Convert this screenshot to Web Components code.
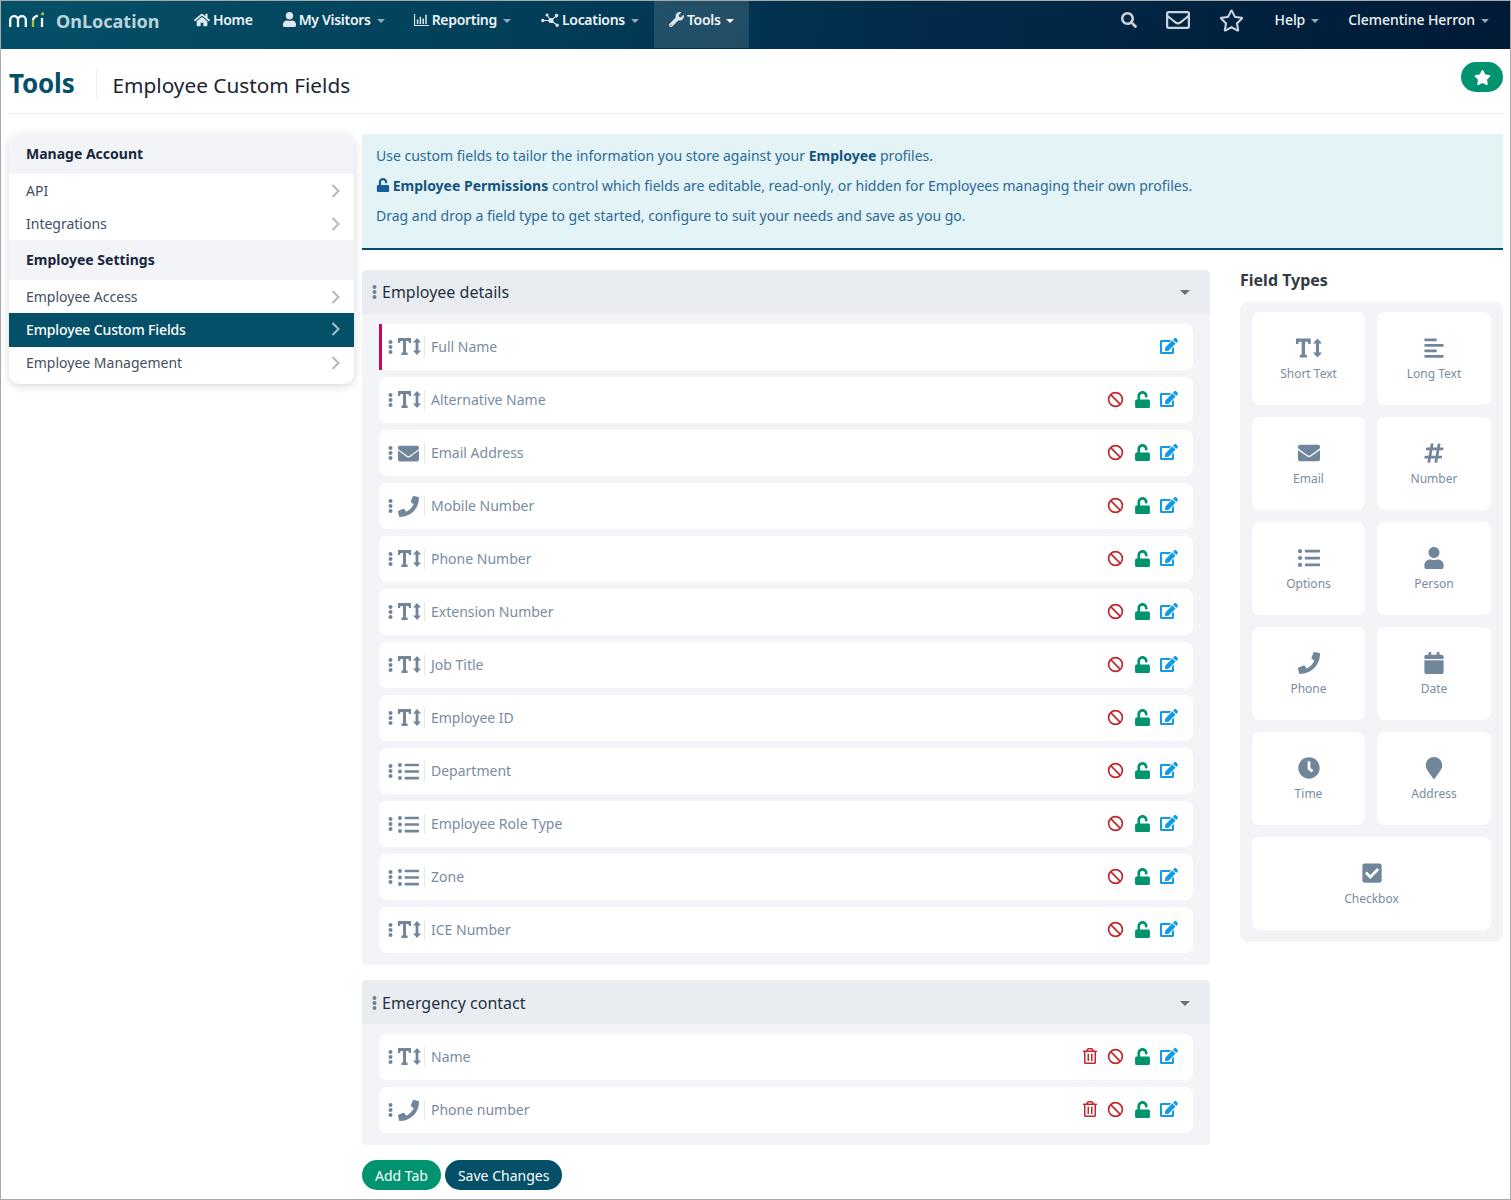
<!DOCTYPE html>
<html>
<head>
<meta charset="utf-8">
<title>Employee Custom Fields</title>
<style>
  html, body { margin: 0; padding: 0; background: #fff; }
  body { font-family: "Noto Sans", "Open Sans", sans-serif; font-size: 14px; }
</style>
</head>
<body>
<app-shell>
  <top-nav slot="nav"></top-nav>
  <page-title slot="title" section="Tools" name="Employee Custom Fields"></page-title>

  <side-menu slot="side">
    <menu-head>Manage Account</menu-head>
    <menu-item>API</menu-item>
    <menu-item>Integrations</menu-item>
    <menu-head>Employee Settings</menu-head>
    <menu-item>Employee Access</menu-item>
    <menu-item active>Employee Custom Fields</menu-item>
    <menu-item class="last">Employee Management</menu-item>
  </side-menu>

  <info-banner slot="banner"></info-banner>

  <div slot="tabs">
    <field-tab label="Employee details">
      <field-row icon="text" label="Full Name" locked></field-row>
      <field-row icon="text" label="Alternative Name"></field-row>
      <field-row icon="envelope" label="Email Address"></field-row>
      <field-row icon="phone" label="Mobile Number"></field-row>
      <field-row icon="text" label="Phone Number"></field-row>
      <field-row icon="text" label="Extension Number"></field-row>
      <field-row icon="text" label="Job Title"></field-row>
      <field-row icon="text" label="Employee ID"></field-row>
      <field-row icon="list" label="Department"></field-row>
      <field-row icon="list" label="Employee Role Type"></field-row>
      <field-row icon="list" label="Zone"></field-row>
      <field-row icon="text" label="ICE Number"></field-row>
    </field-tab>
    <field-tab label="Emergency contact" style="--head-pad: 2px">
      <field-row icon="text" label="Name" removable></field-row>
      <field-row icon="phone" label="Phone number" removable></field-row>
    </field-tab>
    <action-bar></action-bar>
  </div>

  <field-types slot="types">
    <type-card icon="text" label="Short Text"></type-card>
    <type-card icon="align" label="Long Text"></type-card>
    <type-card icon="envelope" label="Email"></type-card>
    <type-card icon="hash" label="Number"></type-card>
    <type-card icon="list" label="Options"></type-card>
    <type-card icon="user" label="Person"></type-card>
    <type-card icon="phone" label="Phone"></type-card>
    <type-card icon="calendar" label="Date"></type-card>
    <type-card icon="clock" label="Time"></type-card>
    <type-card icon="marker" label="Address"></type-card>
    <type-card icon="check" label="Checkbox" wide></type-card>
  </field-types>
</app-shell>

<script>
const dot = (x, y, r) => `M${x - r} ${y}a${r} ${r} 0 1 0 ${2 * r} 0a${r} ${r} 0 1 0 ${-2 * r} 0z`;
const bar = (x1, y1, x2, y2, w) => {
  const len = Math.hypot(x2 - x1, y2 - y1);
  const nx = (y1 - y2) / len * w / 2, ny = (x2 - x1) / len * w / 2;
  return `M${x1 + nx} ${y1 + ny}L${x2 + nx} ${y2 + ny}L${x2 - nx} ${y2 - ny}L${x1 - nx} ${y1 - ny}z`;
};

const ICONS = {
  star: ['0 0 576 512', 'M259.3 17.8L194 150.2 47.9 171.5c-26.2 3.8-36.7 36.1-17.7 54.6l105.7 103-25 145.5c-4.5 26.3 23.2 46 46.4 33.7L288 439.6l130.7 68.7c23.2 12.2 50.9-7.4 46.4-33.7l-25-145.5 105.7-103c19-18.5 8.5-50.8-17.7-54.6L382 150.2 316.7 17.8c-11.7-23.6-45.6-23.9-57.4 0z'],
  starline: ['0 0 576 512', 'M528.1 171.5L382 150.2 316.7 17.8c-11.7-23.6-45.6-23.9-57.4 0L194 150.2 47.9 171.5c-26.2 3.8-36.7 36.1-17.7 54.6l105.7 103-25 145.5c-4.5 26.3 23.2 46 46.4 33.7L288 439.6l130.7 68.7c23.2 12.2 50.9-7.4 46.4-33.7l-25-145.5 105.7-103c19-18.5 8.5-50.8-17.7-54.6zM388.6 312.3l23.7 138.4L288 385.4l-124.3 65.3 23.7-138.4-100.6-98 139-20.2 62.2-126 62.2 126 139 20.2-100.6 98z'],
  phone: ['0 0 512 512', 'M493.4 24.6l-104-24c-11.3-2.6-22.9 3.3-27.5 13.9l-48 112c-4.2 9.8-1.4 21.3 6.9 28l60.6 49.6c-36 76.7-98.9 140.5-177.2 177.2l-49.6-60.6c-6.8-8.3-18.2-11.1-28-6.9l-112 48C3.9 366.5-2 378.1.6 389.4l24 104C27.1 504.2 36.7 512 48 512c256.1 0 464-207.5 464-464 0-11.2-7.7-20.9-18.6-23.4z'],
  envelope: ['0 0 512 512', 'M502.3 190.8c3.9-3.1 9.7-.2 9.7 4.7V400c0 26.5-21.5 48-48 48H48c-26.5 0-48-21.5-48-48V195.6c0-5 5.7-7.8 9.7-4.7 22.4 17.4 52.1 39.5 154.1 113.6 21.1 15.4 56.7 47.8 92.2 47.6 35.7.3 72-32.8 92.3-47.6 102-74.1 131.6-96.3 154-113.7zM256 320c23.2.4 56.6-29.2 73.4-41.4 132.7-96.3 142.8-104.7 173.4-128.7 5.8-4.5 9.2-11.5 9.2-18.9v-19c0-26.5-21.5-48-48-48H48C21.5 64 0 85.5 0 112v19c0 7.4 3.4 14.3 9.2 18.9 30.6 23.9 40.7 32.4 173.4 128.7 16.8 12.2 50.2 41.8 73.4 41.4z'],
  envelopeline: ['0 0 512 512', 'M464 64H48C21.49 64 0 85.49 0 112v288c0 26.51 21.49 48 48 48h416c26.51 0 48-21.49 48-48V112c0-26.51-21.49-48-48-48zm0 48v40.805c-22.422 18.259-58.168 46.651-134.587 106.49-16.841 13.247-50.201 45.072-73.413 44.701-23.208.375-56.579-31.459-73.413-44.701C106.18 199.465 70.425 171.067 48 152.805V112h416zM48 400V214.398c22.914 18.251 55.409 43.862 104.938 82.646 21.857 17.205 60.134 55.186 103.062 54.955 42.717.231 80.509-37.199 103.053-54.947 49.528-38.783 82.032-64.401 104.947-82.653V400H48z'],
  user: ['0 0 448 512', 'M224 256c70.7 0 128-57.3 128-128S294.7 0 224 0 96 57.3 96 128s57.3 128 128 128zm89.6 32h-16.7c-22.2 10.2-46.9 16-72.9 16s-50.6-5.8-72.9-16h-16.7C60.2 288 0 348.2 0 422.4V464c0 26.5 21.5 48 48 48h352c26.5 0 48-21.5 48-48v-41.6c0-74.2-60.2-134.4-134.4-134.4z'],
  home: ['0 0 576 512', 'M280.37 148.26L96 300.11V464a16 16 0 0 0 16 16l112.06-.29a16 16 0 0 0 15.92-16V368a16 16 0 0 1 16-16h64a16 16 0 0 1 16 16v95.64a16 16 0 0 0 16 16.05L464 480a16 16 0 0 0 16-16V300L295.67 148.26a12.19 12.19 0 0 0-15.3 0zM571.6 251.47L488 182.56V44.05a12 12 0 0 0-12-12h-56a12 12 0 0 0-12 12v72.61L318.47 43a48 48 0 0 0-61 0L4.34 251.47a12 12 0 0 0-1.6 16.9l25.5 31A12 12 0 0 0 45.15 301l235.22-193.74a12.19 12.19 0 0 1 15.3 0L530.9 301a12 12 0 0 0 16.9-1.6l25.5-31a12 12 0 0 0-1.7-16.93z'],
  wrench: ['0 0 512 512', 'M507.73 109.1c-2.24-9.03-13.54-12.09-20.12-5.51l-74.36 74.36-67.88-11.31-11.31-67.88 74.36-74.36c6.62-6.62 3.43-17.9-5.66-20.16-47.38-11.74-99.55.91-136.58 37.93-39.64 39.64-50.55 97.1-34.05 147.2L18.74 402.76c-24.99 24.99-24.99 65.51 0 90.5 24.99 24.99 65.51 24.99 90.5 0l213.21-213.21c50.12 16.71 107.47 5.68 147.37-34.22 37.07-37.07 49.7-89.32 37.91-136.73zM64 472c-13.25 0-24-10.75-24-24 0-13.26 10.75-24 24-24s24 10.74 24 24c0 13.25-10.75 24-24 24z'],
  search: ['0 0 512 512', 'M505 442.7L405.3 343c-4.5-4.5-10.6-7-17-7H372c27.6-35.3 44-79.7 44-128C416 93.1 322.9 0 208 0S0 93.1 0 208s93.1 208 208 208c48.3 0 92.7-16.4 128-44v16.3c0 6.4 2.5 12.5 7 17l99.7 99.7c9.4 9.4 24.6 9.4 33.9 0l28.3-28.3c9.4-9.4 9.4-24.6.1-34zM208 336c-70.7 0-128-57.2-128-128 0-70.7 57.2-128 128-128 70.7 0 128 57.2 128 128 0 70.7-57.2 128-128 128z'],
  unlock: ['0 0 448 512', 'M400 256H152V152.9c0-39.6 31.7-72.5 71.3-72.9 40-.4 72.7 32.1 72.7 72v16c0 13.3 10.7 24 24 24h32c13.3 0 24-10.7 24-24v-16C376 68 307.5-.3 223.5 0 139.5.3 72 69.5 72 153.5V256H48c-26.5 0-48 21.5-48 48v160c0 26.5 21.5 48 48 48h352c26.5 0 48-21.5 48-48V304c0-26.5-21.5-48-48-48z'],
  edit: ['0 0 576 512', 'M402.6 83.2l90.2 90.2c3.8 3.8 3.8 10 0 13.8L274.4 405.6l-92.8 10.3c-12.4 1.4-22.9-9.1-21.5-21.5l10.3-92.8L388.8 83.2c3.8-3.8 10-3.8 13.8 0zm162-22.9l-48.8-48.8c-15.2-15.2-39.9-15.2-55.2 0l-35.4 35.4c-3.8 3.8-3.8 10 0 13.8l90.2 90.2c3.8 3.8 10 3.8 13.8 0l35.4-35.4c15.2-15.3 15.2-40 0-55.2zM384 346.2V448H64V128h229.8c3.2 0 6.2-1.3 8.5-3.5l40-40c7.6-7.6 2.2-20.5-8.5-20.5H48C21.5 64 0 85.5 0 112v352c0 26.5 21.5 48 48 48h352c26.5 0 48-21.5 48-48V306.2c0-10.7-12.9-16-20.5-8.5l-40 40c-2.2 2.3-3.5 5.3-3.5 8.5z'],
  trash: ['0 0 448 512', 'M268 416h24a12 12 0 0 0 12-12V188a12 12 0 0 0-12-12h-24a12 12 0 0 0-12 12v216a12 12 0 0 0 12 12zM432 80h-82.41l-34-56.7A48 48 0 0 0 274.41 0H173.59a48 48 0 0 0-41.16 23.3L98.41 80H16A16 16 0 0 0 0 96v16a16 16 0 0 0 16 16h16v336a48 48 0 0 0 48 48h288a48 48 0 0 0 48-48V128h16a16 16 0 0 0 16-16V96a16 16 0 0 0-16-16zM171.84 50.91A6 6 0 0 1 177 48h94a6 6 0 0 1 5.15 2.91L293.61 80H154.39zM368 464H80V128h288zm-212-48h24a12 12 0 0 0 12-12V188a12 12 0 0 0-12-12h-24a12 12 0 0 0-12 12v216a12 12 0 0 0 12 12z'],
  list: ['0 0 512 512', 'M48 48a48 48 0 1 0 48 48 48 48 0 0 0-48-48zm0 160a48 48 0 1 0 48 48 48 48 0 0 0-48-48zm0 160a48 48 0 1 0 48 48 48 48 0 0 0-48-48zm448 16H176a16 16 0 0 0-16 16v32a16 16 0 0 0 16 16h320a16 16 0 0 0 16-16v-32a16 16 0 0 0-16-16zm0-320H176a16 16 0 0 0-16 16v32a16 16 0 0 0 16 16h320a16 16 0 0 0 16-16V80a16 16 0 0 0-16-16zm0 160H176a16 16 0 0 0-16 16v32a16 16 0 0 0 16 16h320a16 16 0 0 0 16-16v-32a16 16 0 0 0-16-16z'],
  align: ['0 0 448 512', 'M12.83 352h262.34A12.82 12.82 0 0 0 288 339.17v-38.34A12.82 12.82 0 0 0 275.17 288H12.83A12.82 12.82 0 0 0 0 300.83v38.34A12.82 12.82 0 0 0 12.83 352zm0-256h262.34A12.82 12.82 0 0 0 288 83.17V44.83A12.82 12.82 0 0 0 275.17 32H12.83A12.82 12.82 0 0 0 0 44.83v38.34A12.82 12.82 0 0 0 12.83 96zM432 160H16a16 16 0 0 0-16 16v32a16 16 0 0 0 16 16h416a16 16 0 0 0 16-16v-32a16 16 0 0 0-16-16zm0 256H16a16 16 0 0 0-16 16v32a16 16 0 0 0 16 16h416a16 16 0 0 0 16-16v-32a16 16 0 0 0-16-16z'],
  hash: ['0 0 448 512', 'M440.667 182.109l7.143-40c1.313-7.355-4.342-14.109-11.813-14.109h-74.81l14.623-81.891C377.123 38.754 371.468 32 363.997 32h-40.632a12 12 0 0 0-11.813 9.891L296.175 128H197.54l14.623-81.891C213.477 38.754 207.822 32 200.35 32h-40.632a12 12 0 0 0-11.813 9.891L132.528 128H53.432a12 12 0 0 0-11.813 9.891l-7.143 40C33.163 185.246 38.818 192 46.289 192h74.81L98.242 320H19.146a12 12 0 0 0-11.813 9.891l-7.143 40C-1.123 377.246 4.532 384 12.003 384h74.81L72.19 465.891C70.877 473.246 76.532 480 84.003 480h40.632a12 12 0 0 0 11.813-9.891L151.825 384h98.634l-14.623 81.891C234.523 473.246 240.178 480 247.65 480h40.632a12 12 0 0 0 11.813-9.891L315.472 384h79.096a12 12 0 0 0 11.813-9.891l7.143-40c1.313-7.355-4.342-14.109-11.813-14.109h-74.81l22.857-128h79.096a12 12 0 0 0 11.813-9.891zM261.889 320h-98.634l22.857-128h98.634l-22.857 128z'],
  calendar: ['0 0 448 512', 'M12 192h424c6.6 0 12 5.4 12 12v260c0 26.5-21.5 48-48 48H48c-26.5 0-48-21.5-48-48V204c0-6.6 5.4-12 12-12zm436-44v-36c0-26.5-21.5-48-48-48h-48V12c0-6.6-5.4-12-12-12h-40c-6.6 0-12 5.4-12 12v52H160V12c0-6.6-5.4-12-12-12h-40c-6.6 0-12 5.4-12 12v52H48C21.5 64 0 85.5 0 112v36c0 6.6 5.4 12 12 12h424c6.6 0 12-5.4 12-12z'],
  clock: ['0 0 512 512', 'M256,8C119,8,8,119,8,256S119,504,256,504,504,393,504,256,393,8,256,8Zm92.49,313h0l-20,25a16,16,0,0,1-22.49,2.5h0l-67-49.72a40,40,0,0,1-15-31.23V112a16,16,0,0,1,16-16h32a16,16,0,0,1,16,16V256l58,42.5A16,16,0,0,1,348.49,321Z'],
  marker: ['0 0 384 512', 'M172.268 501.67C26.97 291.031 0 269.413 0 192 0 85.961 85.961 0 192 0s192 85.961 192 192c0 77.413-26.97 99.031-172.268 309.67-9.535 13.774-29.93 13.773-39.464 0z'],
  check: ['0 0 448 512', 'M400 480H48c-26.51 0-48-21.49-48-48V80c0-26.51 21.49-48 48-48h352c26.51 0 48 21.49 48 48v352c0 26.51-21.49 48-48 48zm-204.686-98.059l184-184c6.248-6.248 6.248-16.379 0-22.627l-22.627-22.627c-6.248-6.248-16.379-6.249-22.628 0L184 302.745l-70.059-70.059c-6.248-6.248-16.379-6.248-22.628 0l-22.627 22.627c-6.248 6.248-6.248 16.379 0 22.627l104 104c6.249 6.25 16.379 6.25 22.628.001z'],
  text: ['0 0 23 17', 'M0 0h13v5h-2l-.6-2H8v11.5h1.6V17H3.4v-2.5H5V3H2.6L2 5H0zM19 0l4 4.5h-2.6v8H23L19 17l-4-4.5h2.6v-8H15z'],
  chart: ['0 0 16 14', 'M0 1h1.2v11.8H16V14H0zM3 7h1.6v4.8H3zM6 4h1.6v7.8H6zM9 6h1.6v5.8H9zM12 2h1.6v9.8H12z'],
  nodes: ['0 0 18 14', [
    dot(1.8, 7.5, 1.7), dot(6, 2, 1.5), dot(15.6, 2.6, 1.8), dot(16.2, 12.2, 1.7), dot(10, 7.5, 2.6),
    bar(1.8, 7.5, 10, 7.5, 1.1), bar(6, 2, 10, 7.5, 1.1), bar(15.6, 2.6, 10, 7.5, 1.1), bar(16.2, 12.2, 10, 7.5, 1.1)
  ].join('')]
};

function icon(name, size) {
  const [box, d] = ICONS[name];
  return `<svg width="${size}" height="${size}" viewBox="${box}" fill="currentColor" aria-hidden="true"><path d="${d}"/></svg>`;
}

const DOTS = `<svg width="5" height="14" viewBox="0 0 5 14" fill="currentColor" aria-hidden="true"><circle cx="2.5" cy="2" r="2"/><circle cx="2.5" cy="7" r="2"/><circle cx="2.5" cy="12" r="2"/></svg>`;
const BAN = `<svg width="17" height="17" viewBox="0 0 17 17" fill="none" stroke="currentColor" stroke-width="1.7" aria-hidden="true"><circle cx="8.5" cy="8.5" r="6.9"/><path d="M3.7 3.7l9.6 9.6"/></svg>`;

class Base extends HTMLElement {
  constructor() {
    super();
    this.attachShadow({ mode: 'open' });
  }
  connectedCallback() {
    this.shadowRoot.innerHTML = this.render();
  }
}

class AppShell extends Base {
  render() {
    return `
      <style>
        :host { display: block; width: 1509px; height: 1198px; border: 1px solid #a9a9a9; overflow: hidden; background: #fff; }
        .page { display: grid; grid-template-columns: 345px 1141px; column-gap: 8px; padding: 20px 7px 0 8px; }
        .work { display: flex; gap: 30px; margin-top: 20px; }
        .tabs { width: 848px; flex: none; }
        .types { width: 263px; flex: none; }
      </style>
      <slot name="nav"></slot>
      <slot name="title"></slot>
      <div class="page">
        <div><slot name="side"></slot></div>
        <div>
          <slot name="banner"></slot>
          <div class="work">
            <div class="tabs"><slot name="tabs"></slot></div>
            <div class="types"><slot name="types"></slot></div>
          </div>
        </div>
      </div>`;
  }
}

class TopNav extends Base {
  render() {
    const link = (ic, w, text, caret, extra = '', style = '') => `
      <a class="link ${extra}" style="${style}">${ic ? `<span class="ic">${icon(ic, w)}</span>` : ''}${text}${caret ? '<i class="caret"></i>' : ''}</a>`;
    return `
      <style>
        :host { display: flex; align-items: stretch; height: 48px; color: #fff;
          background: linear-gradient(100deg, #045068 0%, #03405a 32%, #012a48 62%, #001a36 100%);
          font: 600 14px "Noto Sans", sans-serif; letter-spacing: -.3px; }
        .brand { display: flex; align-items: center; width: 178px; padding: 0 0 8px 8px; box-sizing: border-box; gap: 9px; }
        .brand svg { overflow: visible; }
        .brand b { color: #b9d3da; font-size: 18px; font-weight: 700; letter-spacing: 0; }
        .link { display: flex; align-items: center; height: 47px; box-sizing: border-box; padding: 0 15px 10px; white-space: nowrap; color: #eef3f6; }
        .link.on { background: rgba(255,255,255,.13); }
        .ic { display: inline-flex; margin-right: 3px; color: #dfe8ec; }
        .person .ic { margin: 0 2px 0 -1px; }
        .caret { width: 0; height: 0; margin-left: 6px; margin-top: 2px; border: 4px solid transparent; border-top-color: #98a9b4; border-bottom: 0; }
        .on .caret { border-top-color: #fff; margin-left: 5px; }
        .gap { flex: 1; }
        .tool { display: flex; align-items: center; padding-bottom: 10px; color: #c9d2d9; }
        .help { font-weight: 500; letter-spacing: -.06px; }
      </style>
      <div class="brand">
        <svg width="38" height="18" viewBox="0 0 38 18" fill="none" stroke="#fff" stroke-width="2.3" aria-hidden="true">
          <path d="M1.2 15V8a3.9 3.9 0 0 1 7.8 0v7M9 8a3.9 3.9 0 0 1 7.8 0v7"/>
          <path d="M24 8.5a4.8 4.8 0 0 1 5-4.6"/>
          <path d="M24 15V8.5" stroke="#a8c83a"/>
          <path d="M33 15V6"/>
          <circle cx="33.6" cy="1.8" r="1.6" fill="#a8c83a" stroke="none"/>
        </svg>
        <b>OnLocation</b>
      </div>
      ${link('home', 16, 'Home', false)}
      ${link('user', 15, 'My Visitors', true, 'person', 'margin-right:-1px')}
      ${link('chart', 15, 'Reporting', true)}
      ${link('nodes', 18, 'Locations', true)}
      ${link('wrench', 15, 'Tools', true, 'on')}
      <span class="gap"></span>
      <span class="tool" style="margin-right:29px">${icon('search', 16)}</span>
      <span class="tool" style="margin-right:29px">${icon('envelopeline', 24)}</span>
      <span class="tool" style="margin-right:16px">${icon('starline', 25)}</span>
      ${link('', 0, 'Help', true, 'help')}
      <a class="link help" style="padding-left:14px;padding-right:21px">Clementine Herron<i class="caret"></i></a>`;
  }
}

class PageTitle extends Base {
  render() {
    return `
      <style>
        :host { display: flex; align-items: center; height: 60px; padding-top: 4px; margin: 0 7px 0 8px; border-bottom: 1px solid #ececf0; position: relative; }
        h1 { margin: 0; font: 700 26px "Noto Sans", sans-serif; color: #045068; padding-right: 22px; letter-spacing: -.2px; line-height: 36px; }
        h2 { margin: 2px 0 0; height: 28px; box-sizing: border-box; padding: 2px 0 0 15px; font: 400 20.8px/26px "Noto Sans", sans-serif; color: #1c2530; border-left: 1px solid #ececf0; }
        .fav { position: absolute; right: 0; top: 13px; width: 42px; height: 30px; border-radius: 15px; background: #00936f; color: #fff; display: flex; align-items: center; justify-content: center; }
      </style>
      <h1>${this.getAttribute('section')}</h1>
      <h2>${this.getAttribute('name')}</h2>
      <span class="fav">${icon('star', 17)}</span>`;
  }
}

class SideMenu extends Base {
  render() {
    return `
      <style>
        :host { display: block; background: #fff; border-radius: 10px; overflow: hidden; padding-bottom: 4px; box-shadow: 0 2px 9px rgba(0,0,0,.16); }
      </style>
      <slot></slot>`;
  }
}

class MenuHead extends Base {
  render() {
    return `
      <style>
        :host { display: flex; align-items: center; height: 40px; box-sizing: border-box; padding: 0 0 2px 17px; background: #f3f4f8; color: #16263b; font: 700 14px "Noto Sans", sans-serif; }
      </style>
      <slot></slot>`;
  }
}

class MenuItem extends Base {
  render() {
    return `
      <style>
        :host { display: flex; align-items: center; justify-content: space-between; height: 33px; box-sizing: border-box; padding: 0 14px 0 17px; color: #42505f; font: 400 14px "Noto Sans", sans-serif; }
        :host(.last) { padding-bottom: 2px; }
        :host([active]) { height: 34px; padding-bottom: 2px; background: #045068; color: #fff; font-weight: 500; letter-spacing: -.13px; }
        svg { color: #b4b6b8; }
        :host([active]) svg { color: #a9c2cc; }
      </style>
      <slot></slot>
      <svg width="9" height="14" viewBox="0 0 9 14" fill="none" stroke="currentColor" stroke-width="2" aria-hidden="true"><path d="M1.5 1l6 6-6 6"/></svg>`;
  }
}

class InfoBanner extends Base {
  render() {
    return `
      <style>
        :host { display: block; height: 107px; padding: 7px 14px 0; background: #e4f3f5; border-bottom: 2px solid #045068; color: #2a6a97; font: 400 14px/30px "Noto Sans", sans-serif; }
        b { font-weight: 700; color: #15547f; }
        svg { vertical-align: -1px; margin-right: -1px; }
      </style>
      <div>Use custom fields to tailor the information you store against your <b>Employee</b> profiles.</div>
      <div><span style="color:#15609a">${icon('unlock', 14)}</span> <b>Employee Permissions</b> control which fields are editable, read-only, or hidden for Employees managing their own profiles.</div>
      <div>Drag and drop a field type to get started, configure to suit your needs and save as you go.</div>`;
  }
}

class FieldTab extends Base {
  render() {
    return `
      <style>
        :host { display: block; margin-bottom: 15px; background: #f3f4f8; border-radius: 5px 5px 3px 3px; overflow: hidden; }
        header { display: flex; align-items: center; height: 44px; box-sizing: border-box; padding: var(--head-pad, 0) 20px 0 10px; background: #e9edf1; color: #243244; font: 400 16px "Noto Sans", sans-serif; }
        header svg { color: #6f8092; margin-right: 5px; }
        .name { flex: 1; }
        .caret { border: 5px solid transparent; border-top-color: #6f6f6f; border-bottom: 0; }
        .body { display: flex; flex-direction: column; gap: 7px; padding: 10px 17px 12px; }
      </style>
      <header>${DOTS}<span class="name">${this.getAttribute('label')}</span><i class="caret"></i></header>
      <div class="body"><slot></slot></div>`;
  }
}

class FieldRow extends Base {
  render() {
    const kind = this.getAttribute('icon');
    const locked = this.hasAttribute('locked');
    const removable = this.hasAttribute('removable');
    return `
      <style>
        :host { display: flex; align-items: center; height: 46px; padding: 0 15px 0 9px; background: #fff; border-radius: 8px; color: #71869b; box-sizing: border-box; }
        :host([locked]) { border-left: 3px solid #c8075b; padding-left: 6px; border-radius: 0 8px 8px 0; }
        .dots { display: flex; width: 10px; margin-top: -1px; }
        .kind { display: flex; align-items: center; width: 27px; height: 20px; border-right: 1px solid #e6e8ec; box-sizing: border-box; }
        .kind.text svg { margin-top: -2px; }
        .label { flex: 1; padding: 0 0 2px 6px; color: #7a8ca1; font: 400 14px "Noto Sans", sans-serif; }
        .acts { display: flex; align-items: center; padding-bottom: 2px; }
        .act { display: flex; }
        .trash { color: #c0282d; margin-right: 9px; }
        .ban { color: #c0282d; margin-right: 10px; }
        .lock { color: #00936f; margin-right: 9px; }
        .edit { color: #0f9be8; }
      </style>
      <span class="dots">${DOTS}</span>
      <span class="kind ${kind}">${kind === 'text' ? icon(kind, 23) : icon(kind, 21)}</span>
      <span class="label">${this.getAttribute('label')}</span>
      <span class="acts">
        ${removable ? `<span class="act trash">${icon('trash', 16)}</span>` : ''}
        ${locked ? '' : `<span class="act ban">${BAN}</span><span class="act lock">${icon('unlock', 17)}</span>`}
        <span class="act edit">${icon('edit', 18)}</span>
      </span>`;
  }
}

class ActionBar extends Base {
  render() {
    return `
      <style>
        :host { display: flex; gap: 4px; }
        span { display: flex; align-items: center; height: 30px; padding: 0 13px; border-radius: 15px; color: #fff; font: 400 14px "Noto Sans", sans-serif; }
        .add { background: #00936f; }
        .save { background: #045068; }
      </style>
      <span class="add">Add Tab</span>
      <span class="save">Save Changes</span>`;
  }
}

class FieldTypes extends Base {
  render() {
    return `
      <style>
        :host { display: block; }
        h3 { margin: 0; height: 32px; font: 700 16px/20px "Noto Sans", sans-serif; color: #333a42; }
        .panel { display: grid; grid-template-columns: 113px 114px; gap: 12px; padding: 10px 12px 12px; background: #f3f4f8; border-radius: 8px; }
      </style>
      <h3>Field Types</h3>
      <div class="panel"><slot></slot></div>`;
  }
}

class TypeCard extends Base {
  render() {
    return `
      <style>
        :host { display: flex; flex-direction: column; align-items: center; height: 93px; padding-top: 24px; box-sizing: border-box; background: #fff; border-radius: 8px; color: #71869b; }
        :host([wide]) { grid-column: span 2; }
        .ic { display: flex; align-items: center; justify-content: center; height: 23px; }
        .label { margin-top: 5px; color: #7a8ca1; font: 400 12px/20px "Noto Sans", sans-serif; }
      </style>
      <span class="ic">${this.getAttribute('icon') === 'text' ? icon('text', 26) : icon(this.getAttribute('icon'), 22)}</span>
      <span class="label">${this.getAttribute('label')}</span>`;
  }
}

customElements.define('app-shell', AppShell);
customElements.define('top-nav', TopNav);
customElements.define('page-title', PageTitle);
customElements.define('side-menu', SideMenu);
customElements.define('menu-head', MenuHead);
customElements.define('menu-item', MenuItem);
customElements.define('info-banner', InfoBanner);
customElements.define('field-tab', FieldTab);
customElements.define('field-row', FieldRow);
customElements.define('action-bar', ActionBar);
customElements.define('field-types', FieldTypes);
customElements.define('type-card', TypeCard);
</script>
</body>
</html>
